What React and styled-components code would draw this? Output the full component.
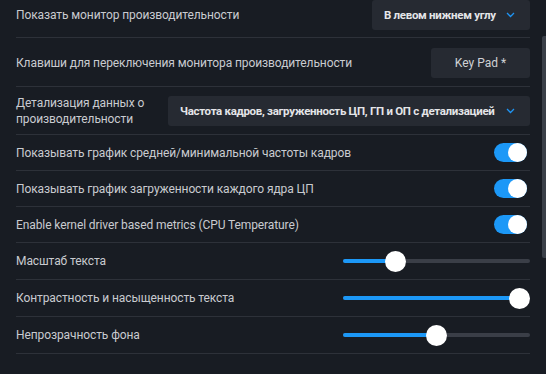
import styled, { createGlobalStyle } from "styled-components";

const GlobalStyle = createGlobalStyle`
  html, body {
    margin: 0;
    padding: 0;
    background: #181c23;
    overflow: hidden;
  }
  * { box-sizing: border-box; }
`;

const Page = styled.div`
  position: relative;
  width: 546px;
  height: 374px;
  padding: 0 16px;
  background: #181c23;
  font-family: Roboto, "Noto Sans", sans-serif;
  color: #c9cbd0;
`;

const Row = styled.div`
  display: flex;
  align-items: center;
  justify-content: space-between;
  gap: 16px;
  min-height: ${(p) => p.$h || 36}px;
  padding: ${(p) => p.$pad || "0"};
  border-bottom: 1px solid #2d3139;
`;

const Label = styled.div`
  font-size: 12px;
  line-height: 16px;
  letter-spacing: -0.1px;
  width: ${(p) => (p.$w ? p.$w + "px" : "auto")};
  flex-shrink: 0;
`;

const Select = styled.div`
  display: flex;
  align-items: center;
  justify-content: space-between;
  height: 30px;
  padding: 0 15px 0 12px;
  background: #262a32;
  border-radius: 3px;
  font-size: 11.5px;
  font-weight: 700;
  letter-spacing: -0.3px;
  white-space: nowrap;
  color: #e4e5e8;
  flex: ${(p) => (p.$grow ? 1 : "none")};
  width: ${(p) => (p.$w ? p.$w + "px" : "auto")};
`;

const Chevron = () => (
  <svg width="9" height="6" viewBox="0 0 9 6" style={{ marginLeft: 10, flexShrink: 0 }}>
    <path d="M1 1l3.5 3.5L8 1" fill="none" stroke="#1e95f5" strokeWidth="1.3" />
  </svg>
);

const KeyButton = styled.div`
  display: flex;
  align-items: center;
  justify-content: center;
  width: 99px;
  height: 30px;
  background: #262a32;
  border-radius: 3px;
  font-size: 12px;
  color: #cfd1d5;
`;

const Toggle = styled.div`
  display: flex;
  justify-content: ${(p) => (p.$on ? "flex-end" : "flex-start")};
  width: 33px;
  height: 19px;
  margin-right: 3px;
  border-radius: 10px;
  background: ${(p) => (p.$on ? "#1c98f7" : "#3c4049")};
`;

const Knob = styled.div`
  width: 19px;
  height: 19px;
  border-radius: 50%;
  background: #fff;
`;

const Slider = styled.div`
  position: relative;
  width: 187px;
  height: 4px;
  border-radius: 2px;
  background: #3a3e47;
`;

const Fill = styled.div`
  height: 100%;
  border-radius: 2px;
  background: #1c98f7;
`;

const Thumb = styled.div`
  position: absolute;
  top: 50%;
  width: 21px;
  height: 21px;
  margin: -10.5px 0 0 -10.5px;
  border-radius: 50%;
  background: #fff;
`;

const ScrollThumb = styled.div`
  position: absolute;
  right: 0;
  top: 36px;
  width: 4px;
  height: 222px;
  border-radius: 2px 0 0 2px;
  background: #3a3f48;
`;

function Range({ value }) {
  const px = 10.5 + (166 * value) / 100;
  return (
    <Slider>
      <Fill style={{ width: px }} />
      <Thumb style={{ left: px }} />
    </Slider>
  );
}

const toggles = [
  "Показывать график средней/минимальной частоты кадров",
  "Показывать график загруженности каждого ядра ЦП",
  "Enable kernel driver based metrics (CPU Temperature)",
];

const sliders = [
  ["Масштаб текста", 25],
  ["Контрастность и насыщенность текста", 100],
  ["Непрозрачность фона", 50],
];

export default function App() {
  return (
    <Page>
      <GlobalStyle />
      <Row $h={38} $pad="0 0 7px">
        <Label>Показать монитор производительности</Label>
        <Select $w={158}>
          В левом нижнем углу
          <Chevron />
        </Select>
      </Row>
      <Row $h={49} $pad="10px 0 8px">
        <Label>Клавиши для переключения монитора производительности</Label>
        <KeyButton>Key Pad *</KeyButton>
      </Row>
      <Row $h={48} $pad="8px 0 7px">
        <Label $w={136}>Детализация данных о производительности</Label>
        <Select $grow>
          Частота кадров, загруженность ЦП, ГП и ОП с детализацией
          <Chevron />
        </Select>
      </Row>
      {toggles.map((t) => (
        <Row key={t} $h={36}>
          <Label>{t}</Label>
          <Toggle $on>
            <Knob />
          </Toggle>
        </Row>
      ))}
      {sliders.map(([t, v]) => (
        <Row key={t} $h={37}>
          <Label>{t}</Label>
          <Range value={v} />
        </Row>
      ))}
      <ScrollThumb />
    </Page>
  );
}
